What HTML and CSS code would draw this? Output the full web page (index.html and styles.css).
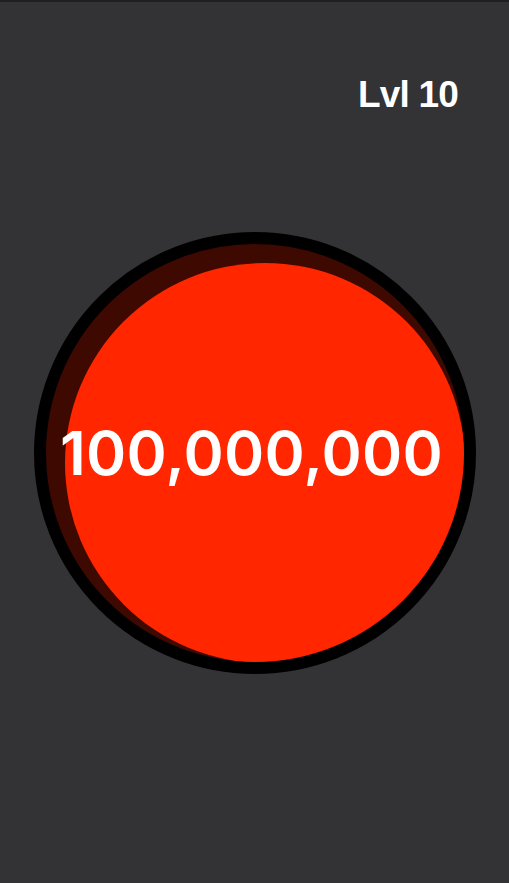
FILE: index.html
```html
<!DOCTYPE html>
<html lang="en">
<head>
<meta charset="utf-8">
<title>Clicker</title>
<link rel="stylesheet" href="styles.css">
</head>
<body>
<div class="screen">
  <header class="top-bar">
    <span class="level">Lvl 10</span>
  </header>
  <main class="stage">
    <div class="button">
      <div class="face"></div>
      <div class="count">100,000,000</div>
    </div>
  </main>
</div>
</body>
</html>
```

FILE: styles.css
```css
html, body {
  margin: 0;
  padding: 0;
  background: #333234;
}

.screen {
  min-height: 100vh;
  box-sizing: border-box;
  border-top: 2px solid #1f1e20;
  display: flex;
  flex-direction: column;
}

.top-bar {
  display: flex;
  justify-content: flex-end;
  padding: 74px 51px 0 0;
}

.level {
  font-family: "Liberation Sans", Arial, sans-serif;
  font-weight: 700;
  font-size: 37px;
  line-height: 1;
  letter-spacing: -0.8px;
  color: #ffffff;
}

.stage {
  display: flex;
  justify-content: center;
  margin-top: 119px;
}

.button {
  width: 442px;
  height: 442px;
  box-sizing: border-box;
  border: 12px solid #000000;
  border-radius: 50%;
  background: #3d0900;
  overflow: hidden;
  display: grid;
  place-items: center;
}

.face {
  grid-area: 1 / 1;
  width: 400px;
  height: 400px;
  border-radius: 50%;
  background: #ff2600;
  transform: translate(10px, 10px);
}

.count {
  grid-area: 1 / 1;
  font-family: Inter, "Open Sans", sans-serif;
  font-weight: 600;
  font-size: 61px;
  line-height: 1;
  color: #ffffff;
  letter-spacing: 0.3px;
  white-space: nowrap;
  transform: translateX(-3px);
}
```
